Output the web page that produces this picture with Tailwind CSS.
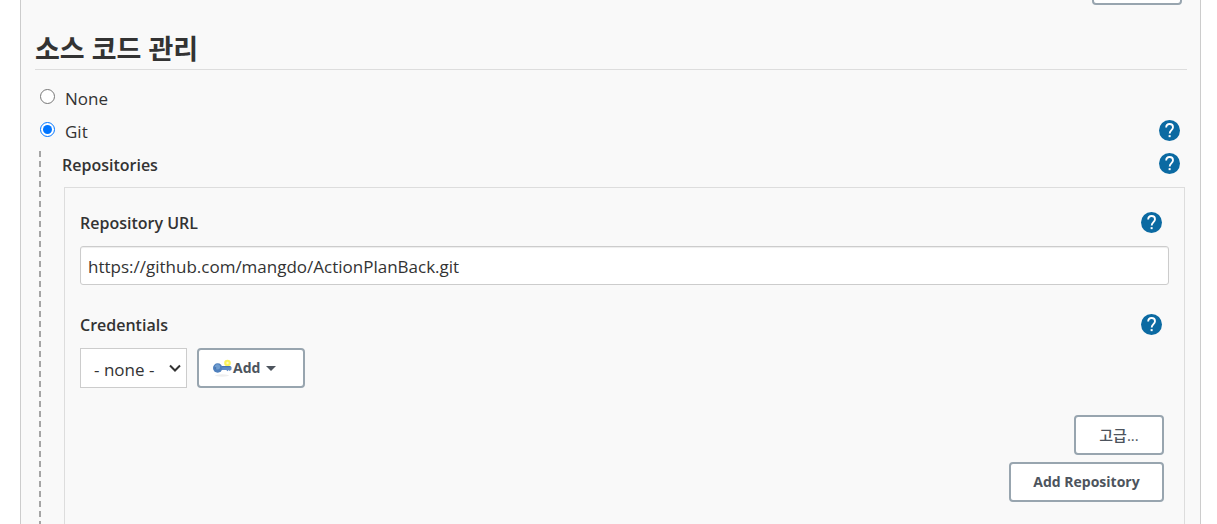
<!DOCTYPE html>
<html lang="ko">
<head>
<meta charset="utf-8">
<meta name="viewport" content="width=device-width, initial-scale=1">
<title>소스 코드 관리</title>
<script src="https://cdn.jsdelivr.net/npm/@tailwindcss/browser@4"></script>
</head>
<body class="bg-white font-['Open_Sans','Noto_Sans_CJK_KR',sans-serif] text-[17px] leading-6 text-[#333]">
<svg class="hidden" aria-hidden="true">
  <symbol id="help" viewBox="0 0 24 24">
    <circle cx="12" cy="12" r="12" fill="#0b6aa2"/>
    <path d="M8.200 8.700C8.200 6 9.900 4.600 12.100 4.600s3.900 1.500 3.900 3.700c0 3-3.800 3.500-3.800 7" fill="none" stroke="#fff" stroke-width="2.100"/>
    <rect x="11" y="17.300" width="2.300" height="2.300" fill="#fff"/>
  </symbol>
</svg>
<main class="ml-5 mr-4 flex min-h-screen flex-col border-x border-[#ccc] bg-[#f9f9f9] pl-3.5 pr-[13px]">
  <div class="flex h-[5px] items-end justify-end overflow-hidden pr-[5px]">
    <button type="button" aria-label="고급" class="h-10 w-[90px] shrink-0 rounded border-2 border-[#98a5af] bg-white"></button>
  </div>
  <h2 class="mt-6 flex h-[41px] items-center border-b border-[#ddd] text-[27px] font-bold">소스 코드 관리</h2>

  <div class="mt-3 flex h-[33px] items-center gap-2.5 pl-[5px]">
    <input type="radio" name="scm" id="none" class="mb-1 size-[15px]">
    <label for="none">None</label>
  </div>
  <div class="flex h-[33px] items-center gap-2.5 pl-[5px] pr-[7px]">
    <input type="radio" name="scm" id="git" checked class="mb-1 size-[15px]">
    <label for="git">Git</label>
    <a href="#" aria-label="Git help" class="mb-0.5 ml-auto"><svg class="size-[21px]"><use href="#help"/></svg></a>
  </div>

  <section class="ml-1 mt-[3px] flex flex-1 flex-col bg-[repeating-linear-gradient(to_bottom,#a5a5a5_0_6px,transparent_6px_10px)] bg-[length:2px_100%] bg-no-repeat pl-[23px]">
    <div class="flex h-[27px] items-center pr-[7px]">
      <h3 class="text-[16px] font-semibold">Repositories</h3>
      <a href="#" aria-label="Repositories help" class="mb-0.5 ml-auto"><svg class="size-[21px]"><use href="#help"/></svg></a>
    </div>
    <div class="ml-0.5 mr-0.5 mt-[9px] flex-1 border-x border-t border-[#ddd] px-[15px] pb-5 pt-[21px]">
      <div class="flex h-7 items-center pr-[7px]">
        <label for="url" class="text-[16px] font-semibold">Repository URL</label>
        <a href="#" aria-label="Repository URL help" class="mb-0.5 ml-auto"><svg class="size-[21px]"><use href="#help"/></svg></a>
      </div>
      <input id="url" type="text" value="https://github.com/mangdo/ActionPlanBack.git" class="mt-[9px] block h-[39px] w-full rounded-[3px] border border-[#ccc] bg-white px-[7px] pt-0.5 shadow-[inset_0_1px_1px_rgba(0,0,0,0.075)]">
      <div class="mt-[26px] flex h-7 items-center pr-[7px]">
        <label for="cred" class="text-[16px] font-semibold">Credentials</label>
        <a href="#" aria-label="Credentials help" class="mb-0.5 ml-auto"><svg class="size-[21px]"><use href="#help"/></svg></a>
      </div>
      <div class="mt-[9px] flex gap-2.5">
        <div class="relative">
          <select id="cred" class="h-10 w-[107px] appearance-none border border-[#ccc] bg-white pl-[13px] pt-1"><option>- none -</option></select>
          <svg class="pointer-events-none absolute right-1.5 top-4 h-2 w-3" viewBox="0 0 12 8" fill="none" stroke="#333" stroke-width="2"><path d="M1 1.500 6 6.500 11 1.500"/></svg>
        </div>
        <button type="button" class="flex h-10 w-[108px] items-center rounded border-2 border-[#98a5af] bg-white pl-3.5 text-[14px] font-bold text-[#4d545d]">
          <svg class="h-[18px] w-5" viewBox="0 0 20 18">
            <ellipse cx="9" cy="16.500" rx="7" ry="1.200" fill="#eee"/>
            <circle cx="14.500" cy="4" r="3.300" fill="#fbf35a"/>
            <circle cx="14.500" cy="4" r="1.200" fill="#fffbc0"/>
            <path d="M8 7h9l1.500 1v2.500l-1.800 1.500-1-.9-1.200 1.200-1.200-1.300H8z" fill="#5f8cc6"/>
            <path d="M8 7.200h9.500v1H8z" fill="#426fa9"/>
            <circle cx="4.700" cy="9" r="4.700" fill="#4f80bd"/>
            <circle cx="4.500" cy="7.800" r="2.600" fill="#709dcf"/>
            <circle cx="2.500" cy="9" r=".8" fill="#3d69a3"/>
          </svg>
          Add
          <svg class="ml-1.5 h-[5px] w-2.5" viewBox="0 0 10 5" fill="#4d545d"><path d="M0 0h10L5 5z"/></svg>
        </button>
      </div>
      <div class="mt-[27px] flex flex-col items-end gap-[7px] pr-[5px] text-[14px] font-bold text-[#4d545d]">
        <button type="button" class="h-10 w-[90px] rounded border-2 border-[#98a5af] bg-white text-[15px] font-medium">고급...</button>
        <button type="button" class="h-10 w-[155px] rounded border-2 border-[#98a5af] bg-white">Add Repository</button>
      </div>
    </div>
  </section>
</main>
</body>
</html>
